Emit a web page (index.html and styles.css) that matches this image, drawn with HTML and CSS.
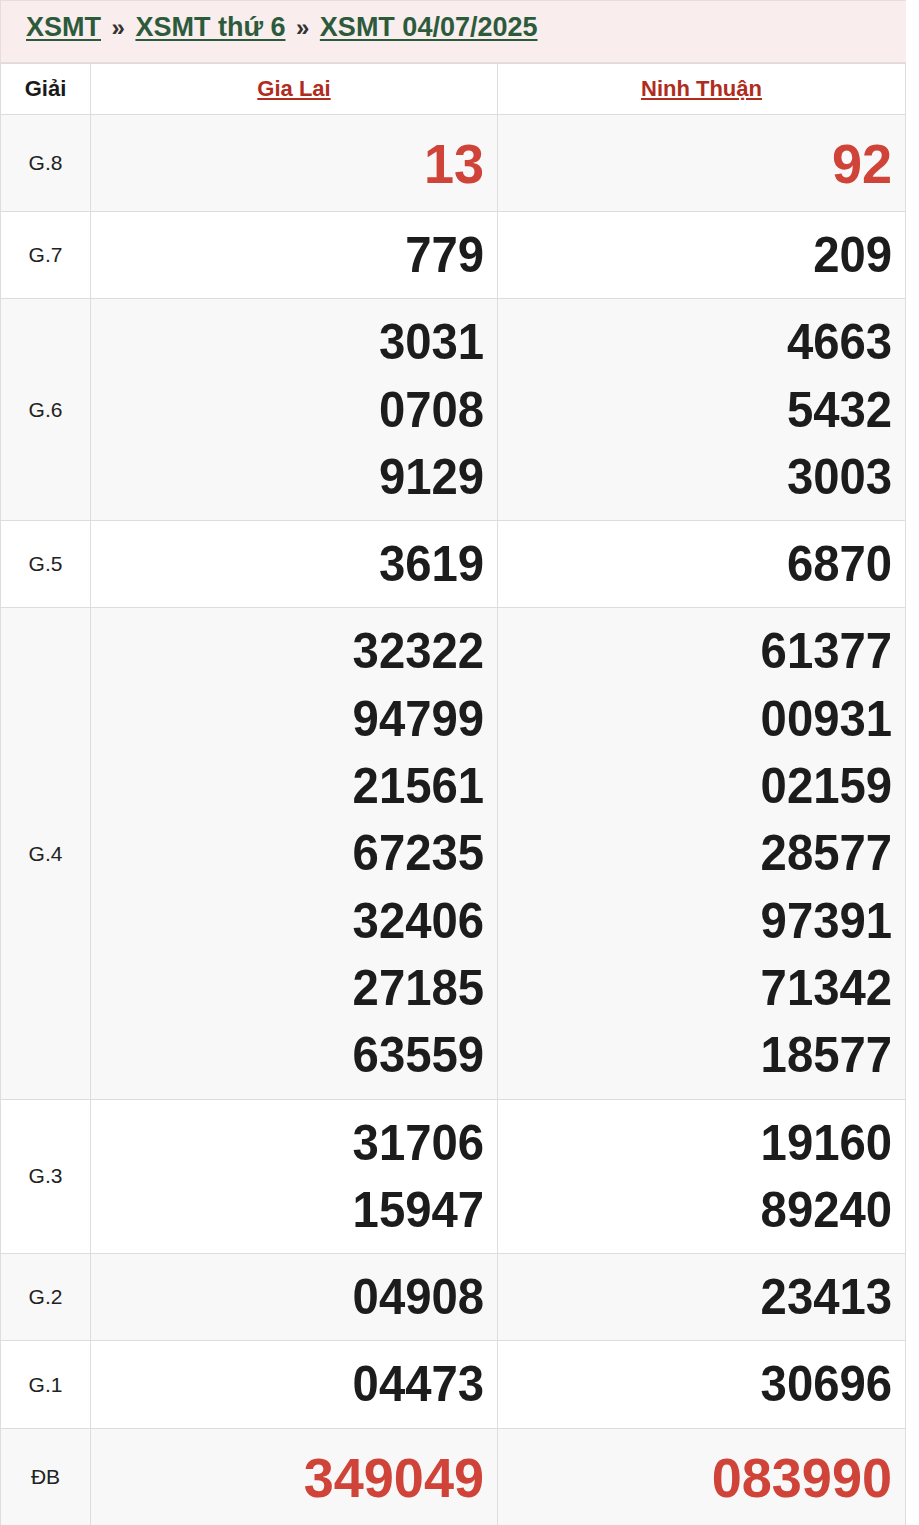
FILE: index.html
```html
<!DOCTYPE html>
<html lang="vi">
<head>
<meta charset="utf-8">
<title>XSMT 04/07/2025</title>
<link rel="stylesheet" href="styles.css">
</head>
<body>
<div class="wrap">
  <div class="crumbs">
    <a href="#">XSMT</a> <span class="sep">»</span> <a href="#">XSMT thứ 6</a> <span class="sep">»</span> <a href="#">XSMT 04/07/2025</a>
  </div>
  <table class="kq">
    <colgroup><col class="c1"><col class="c2"><col class="c3"></colgroup>
    <thead>
      <tr class="head">
        <th class="lbl-h">Giải</th>
        <th><a href="#">Gia Lai</a></th>
        <th><a href="#">Ninh Thuận</a></th>
      </tr>
    </thead>
    <tbody>
      <tr class="alt big">
        <td class="lbl">G.8</td>
        <td class="num red"><div>13</div></td>
        <td class="num red"><div>92</div></td>
      </tr>
      <tr>
        <td class="lbl">G.7</td>
        <td class="num"><div>779</div></td>
        <td class="num"><div>209</div></td>
      </tr>
      <tr class="alt">
        <td class="lbl">G.6</td>
        <td class="num"><div>3031</div><div>0708</div><div>9129</div></td>
        <td class="num"><div>4663</div><div>5432</div><div>3003</div></td>
      </tr>
      <tr>
        <td class="lbl">G.5</td>
        <td class="num"><div>3619</div></td>
        <td class="num"><div>6870</div></td>
      </tr>
      <tr class="alt">
        <td class="lbl">G.4</td>
        <td class="num"><div>32322</div><div>94799</div><div>21561</div><div>67235</div><div>32406</div><div>27185</div><div>63559</div></td>
        <td class="num"><div>61377</div><div>00931</div><div>02159</div><div>28577</div><div>97391</div><div>71342</div><div>18577</div></td>
      </tr>
      <tr>
        <td class="lbl">G.3</td>
        <td class="num"><div>31706</div><div>15947</div></td>
        <td class="num"><div>19160</div><div>89240</div></td>
      </tr>
      <tr class="alt">
        <td class="lbl">G.2</td>
        <td class="num"><div>04908</div></td>
        <td class="num"><div>23413</div></td>
      </tr>
      <tr>
        <td class="lbl">G.1</td>
        <td class="num"><div>04473</div></td>
        <td class="num"><div>30696</div></td>
      </tr>
      <tr class="alt big">
        <td class="lbl">ĐB</td>
        <td class="num red"><div>349049</div></td>
        <td class="num red"><div>083990</div></td>
      </tr>
    </tbody>
  </table>
</div>
</body>
</html>
```
FILE: styles.css
```css
html, body {
  margin: 0;
  padding: 0;
  background: #ffffff;
}
body {
  font-family: "Liberation Sans", Arial, sans-serif;
  color: #222222;
}
.wrap {
  width: 906px;
}
.crumbs {
  background: #f9eded;
  border: 1px solid #eadcdc;
  border-right: none;
  height: 61px;
  line-height: 53px;
  padding: 0 0 0 25px;
  font-size: 27px;
  font-weight: bold;
  white-space: nowrap;
  box-sizing: content-box;
}
.crumbs a {
  color: #2c5b3c;
  text-decoration: underline;
  text-decoration-thickness: 2px;
  text-underline-offset: 3px;
}
.crumbs .sep {
  color: #333333;
  font-size: 24px;
  margin: 0 3px;
}
.kq {
  border-collapse: collapse;
  width: 906px;
  table-layout: fixed;
}
.kq col.c1 { width: 90px; }
.kq col.c2 { width: 407px; }
.kq col.c3 { width: 408px; }
.kq th, .kq td {
  border: 1px solid #dddddd;
}
.kq tr.head th {
  height: 50px;
  padding: 0;
  font-size: 22px;
  font-weight: bold;
  text-align: center;
  vertical-align: middle;
  background: #ffffff;
}
.kq th.lbl-h {
  color: #1a1a1a;
}
.kq th a {
  color: #b02c1e;
  text-decoration: underline;
  text-underline-offset: 2px;
}
.kq tr.alt td {
  background: #f8f8f8;
}
.kq td.lbl {
  text-align: center;
  vertical-align: middle;
  font-size: 21px;
  color: #222222;
  padding: 0;
}
.kq td.num {
  text-align: right;
  vertical-align: middle;
  padding: 10px 13px 9px 0;
  font-size: 50px;
  line-height: 67.3px;
  font-weight: bold;
  color: #1c1c1c;
}
.kq td.num div {
  transform: scaleX(0.945);
  transform-origin: right center;
}
.kq td.num.red {
  color: #cf4339;
  font-size: 56px;
  line-height: 77px;
}
.kq td.num.red div {
  transform: scaleX(0.965);
}
```
